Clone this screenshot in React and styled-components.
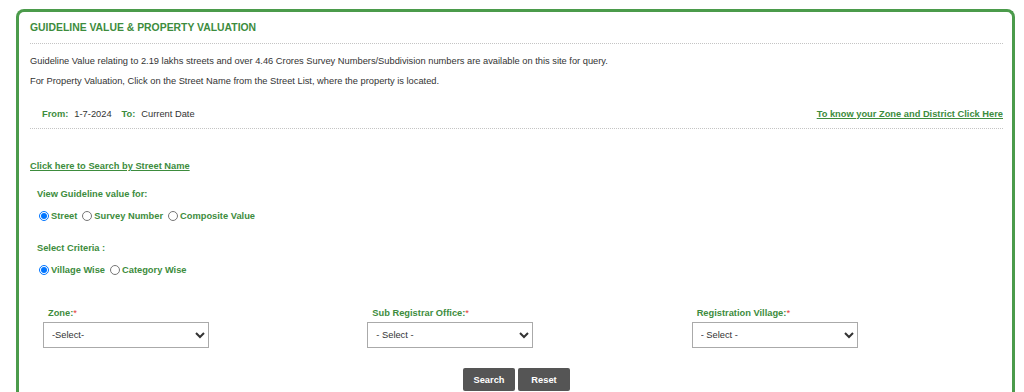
import styled, { createGlobalStyle } from "styled-components";

const GlobalStyle = createGlobalStyle`
  body {
    margin: 0;
    background: #fff;
    font-family: Arial, "Liberation Sans", sans-serif;
    color: #333;
  }
`;

const Panel = styled.div`
  margin: 9px 9px 0 16px;
  border: 3px solid #4b9b4b;
  border-bottom: none;
  border-radius: 8px 8px 0 0;
  padding: 0 9px 30px 11px;
  min-height: 420px;
`;

const Title = styled.h2`
  margin: 0;
  padding: 9px 0 8px;
  font-size: 10.4px;
  line-height: 14px;
  font-weight: bold;
  color: #3d8c3d;
  border-bottom: 1px dotted #c4c4c4;
`;

const Para = styled.p`
  margin: ${(p) => (p.$first ? "7px" : "0")} 0 0;
  font-size: 9.3px;
  line-height: 20px;
`;

const DateRow = styled.div`
  display: flex;
  justify-content: space-between;
  align-items: center;
  margin-top: 13px;
  padding: 0 0 4px 12px;
  line-height: 20px;
  font-size: 9.3px;
  border-bottom: 1px dotted #c4c4c4;
`;

const DateText = styled.span`
  display: flex;
  gap: 6px;
  white-space: pre;
`;

const Key = styled.b`
  color: #3d8c3d;
  margin-left: ${(p) => (p.$spaced ? "4px" : "0")};
`;

const GreenLink = styled.a`
  font-size: 9.3px;
  font-weight: bold;
  color: #3d8c3d;
  text-decoration: underline;
  cursor: pointer;
`;

const StreetLink = styled(GreenLink)`
  display: block;
  margin-top: 27px;
  line-height: 20px;
`;

const Heading = styled.div`
  margin-top: ${(p) => p.$top}px;
  padding-left: 7px;
  font-size: 9.3px;
  line-height: 20px;
  font-weight: bold;
  color: #3d8c3d;
`;

const RadioRow = styled.div`
  display: flex;
  align-items: center;
  padding-left: 9px;
  height: 20px;
  margin-top: 2px;
`;

const RadioLabel = styled.label`
  display: flex;
  align-items: center;
  gap: 2px;
  margin-right: 5px;
  font-size: 9.3px;
  font-weight: bold;
  color: #3d8c3d;

  input {
    width: 10px;
    height: 10px;
    margin: 0;
  }
`;

const FieldGrid = styled.div`
  display: grid;
  grid-template-columns: repeat(3, 1fr);
  margin-top: 27px;
`;

const Field = styled.div`
  padding-left: 13px;
`;

const FieldLabel = styled.div`
  padding-left: 5px;
  margin-bottom: 3px;
  font-size: 9.3px;
  line-height: 12px;
  font-weight: bold;
  color: #3d8c3d;

  span {
    color: #e53935;
    font-weight: normal;
  }
`;

const Select = styled.select`
  width: 166px;
  height: 26px;
  padding: 0 4px;
  border: 1px solid #aaa;
  border-radius: 0;
  background: #fff;
  font-family: Arial, "Liberation Sans", sans-serif;
  font-size: 9.3px;
  color: #333;
`;

const Buttons = styled.div`
  display: flex;
  justify-content: center;
  gap: 3px;
  margin-top: 20px;
`;

const Button = styled.button`
  width: 52px;
  height: 23px;
  border: none;
  border-radius: 2px;
  background: #555;
  color: #fff;
  font-family: Arial, "Liberation Sans", sans-serif;
  font-size: 9.3px;
  font-weight: bold;
`;

const fields = [
  { label: "Zone:", option: "-Select-" },
  { label: "Sub Registrar Office:", option: "- Select -" },
  { label: "Registration Village:", option: "- Select -" },
];

export default function App() {
  return (
    <>
      <GlobalStyle />
      <Panel>
        <Title>GUIDELINE VALUE &amp; PROPERTY VALUATION</Title>
        <Para $first>
          Guideline Value relating to 2.19 lakhs streets and over 4.46 Crores Survey
          Numbers/Subdivision numbers are available on this site for query.
        </Para>
        <Para>
          For Property Valuation, Click on the Street Name from the Street List, where the
          property is located.
        </Para>
        <DateRow>
          <DateText>
            <Key>From:</Key>1-7-2024
            <Key $spaced>To:</Key>Current Date
          </DateText>
          <GreenLink>To know your Zone and District Click Here</GreenLink>
        </DateRow>

        <StreetLink>Click here to Search by Street Name</StreetLink>

        <Heading $top={8}>View Guideline value for:</Heading>
        <RadioRow>
          <RadioLabel>
            <input type="radio" name="view" defaultChecked /> Street
          </RadioLabel>
          <RadioLabel>
            <input type="radio" name="view" /> Survey Number
          </RadioLabel>
          <RadioLabel>
            <input type="radio" name="view" /> Composite Value
          </RadioLabel>
        </RadioRow>

        <Heading $top={12}>Select Criteria :</Heading>
        <RadioRow>
          <RadioLabel>
            <input type="radio" name="criteria" defaultChecked /> Village Wise
          </RadioLabel>
          <RadioLabel>
            <input type="radio" name="criteria" /> Category Wise
          </RadioLabel>
        </RadioRow>

        <FieldGrid>
          {fields.map((f) => (
            <Field key={f.label}>
              <FieldLabel>
                {f.label}
                <span>*</span>
              </FieldLabel>
              <Select defaultValue="">
                <option value="">{f.option}</option>
              </Select>
            </Field>
          ))}
        </FieldGrid>

        <Buttons>
          <Button>Search</Button>
          <Button>Reset</Button>
        </Buttons>
      </Panel>
    </>
  );
}
